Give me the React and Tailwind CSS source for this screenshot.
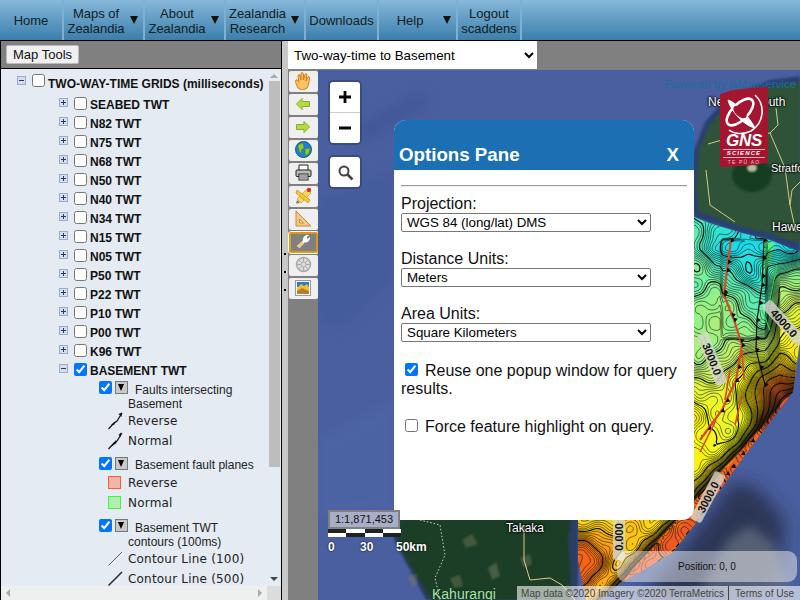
import React from "react";

const SANS = "font-['Liberation_Sans',Arial,sans-serif]";

/* ---------- height field for the contour overlay ---------- */
const gauss = (x, y, cx, cy, r) => Math.exp(-((x - cx) ** 2 + (y - cy) ** 2) / (2 * r * r));
function field(x, y) {
  const d = ((x - 793) * -191 + (y - 392) * -173) / 257.7;
  let v = 0.27 + Math.max(0, Math.min(1, (y - 250) / 170)) * 0.47;
  v += Math.max(0, 700 - x) * 0.0012;
  v += 0.34 * Math.exp(-Math.max(d, 0) / 6);
  v += 0.45 * gauss(x, y, 778, 392, 20);
  v += 0.22 * gauss(x, y, 585, 560, 22);
  v -= 0.18 * gauss(x, y, 788, 248, 14);
  v += 0.1 * gauss(x, y, 695, 262, 14);
  v -= 0.08 * gauss(x, y, 751, 277, 9);
  v -= 0.07 * gauss(x, y, 713, 250, 7);
  v += 0.06 * Math.sin(x * 0.055 + y * 0.02) * Math.cos(y * 0.05 - x * 0.012);
  v += 0.02 * Math.sin(x * 0.19 + 1) * Math.sin(y * 0.17);
  if (x > 766) v += 0.24 * Math.min(1, (x - 766) / 14) * gauss(x, y, 790, 325, 40);
  if (x > 722 && x < 766 && y > 240 && y < 340) v -= 0.03;
  return v;
}
const RAMP = [
  [0.05, [30, 150, 245]], [0.16, [16, 216, 240]], [0.3, [64, 232, 200]], [0.44, [140, 240, 140]],
  [0.58, [205, 240, 100]], [0.74, [248, 248, 16]], [0.9, [252, 196, 16]], [1.05, [252, 112, 16]], [1.2, [232, 80, 36]],
];
function colour(v) {
  if (v <= RAMP[0][0]) return RAMP[0][1];
  for (let i = 1; i < RAMP.length; i++) {
    if (v <= RAMP[i][0]) {
      const a = RAMP[i - 1], b = RAMP[i];
      const t = (v - a[0]) / (b[0] - a[0]);
      return a[1].map((c, k) => Math.round(c + (b[1][k] - c) * t));
    }
  }
  return RAMP[RAMP.length - 1][1];
}
const X0 = 570, Y0 = 205, STEP = 3, NX = 80, NY = 132;
const values = [];
for (let j = 0; j <= NY; j++) {
  const row = [];
  for (let i = 0; i <= NX; i++) row.push(field(X0 + i * STEP, Y0 + j * STEP));
  values.push(row);
}
const bands = {};
for (let j = 0; j < NY; j++) for (let i = 0; i < NX; i++) {
  const k = Math.round(values[j][i] * 50) / 50;
  const cx = X0 + i * STEP, cy = Y0 + j * STEP;
  (bands[k] = bands[k] || []).push(`M${cx} ${cy}h${STEP + 0.4}v${STEP + 0.4}h-${STEP + 0.4}z`);
}
const bandPaths = Object.keys(bands).map((k) => ({ c: `rgb(${colour(+k).join(",")})`, d: bands[k].join("") }));

function contours(level) {
  let d = "";
  const lerp = (a, b) => (level - a) / (b - a);
  for (let j = 0; j < NY; j++) for (let i = 0; i < NX; i++) {
    const a = values[j][i], b = values[j][i + 1], c = values[j + 1][i + 1], e = values[j + 1][i];
    const pts = [];
    const x = X0 + i * STEP, y = Y0 + j * STEP;
    if ((a < level) !== (b < level)) pts.push([x + lerp(a, b) * STEP, y]);
    if ((b < level) !== (c < level)) pts.push([x + STEP, y + lerp(b, c) * STEP]);
    if ((e < level) !== (c < level)) pts.push([x + lerp(e, c) * STEP, y + STEP]);
    if ((a < level) !== (e < level)) pts.push([x, y + lerp(a, e) * STEP]);
    if (pts.length >= 2) d += `M${pts[0][0].toFixed(1)} ${pts[0][1].toFixed(1)}L${pts[1][0].toFixed(1)} ${pts[1][1].toFixed(1)}`;
    if (pts.length === 4) d += `M${pts[2][0].toFixed(1)} ${pts[2][1].toFixed(1)}L${pts[3][0].toFixed(1)} ${pts[3][1].toFixed(1)}`;
  }
  return d;
}
const contourLines = [];
for (let n = 0; n < 110; n++) contourLines.push({ d: contours(0.02 + n * 0.0125), bold: n % 8 === 0 });

function teeth(points, every) {
  let d = "";
  for (let s = 0; s < points.length - 1; s++) {
    const [x0, y0] = points[s], [x1, y1] = points[s + 1];
    const len = Math.hypot(x1 - x0, y1 - y0);
    const nx = (x1 - x0) / len, ny = (y1 - y0) / len;
    for (let t = 0; t < len; t += every) {
      const x = x0 + nx * t, y = y0 + ny * t;
      d += `M${(x + nx * 2.5).toFixed(1)} ${(y + ny * 2.5).toFixed(1)}L${(x - nx * 2.5).toFixed(1)} ${(y - ny * 2.5).toFixed(1)}L${(x + ny * 4).toFixed(1)} ${(y - nx * 4).toFixed(1)}Z`;
    }
  }
  return d;
}
const EDGE = [[752, 440], [727, 473], [697, 520], [673, 550], [630, 580]];
const F1 = [[731, 240], [727, 270], [724, 295], [734, 320], [742, 345], [736, 380], [722, 410], [700, 440]];
const F2 = [[764, 240], [762, 285], [757, 320], [756, 350], [765, 385]];
const toD = (p) => p.map(([x, y], i) => `${i ? "L" : "M"}${x} ${y}`).join("");

const REGION = "M694 217 L712 224 L742 233 L770 240 L800 252 L800 340 L793 392 L745 455 L700 518 L672 553 L640 572 L620 583 L600 600 L586 600 L578 560 L578 515 L600 480 L694 400 Z";

function Tag({ t, x, y, r, w = 54 }) {
  return (
    <g transform={`translate(${x} ${y}) rotate(${r})`}>
      <rect x={-w / 2} y="-6" width={w} height="12" rx="3" fill="#d8d8d0" opacity="0.8" />
      <text x="0" y="4" textAnchor="middle" fontFamily="Liberation Sans" fontSize="11" fontWeight="700" fill="#111">{t}</text>
    </g>
  );
}

function MapArt() {
  return (
    <svg className="absolute left-0 top-0" width="482" height="530" viewBox="318 70 482 530">
      <defs>
        <clipPath id="region"><path d={REGION} /></clipPath>
        <filter id="soft"><feGaussianBlur stdDeviation="6" /></filter>
        <filter id="soft2"><feGaussianBlur stdDeviation="1.2" /></filter>
        <filter id="soft3"><feGaussianBlur stdDeviation="9" /></filter>
      </defs>
      <rect x="318" y="70" width="482" height="530" fill="#4a5f9f" />
      <g filter="url(#soft)" opacity="0.55">
        <path d="M420 90 L350 130 L360 145 L430 105 Z" fill="#3c5295" />
        <path d="M318 200 L394 170 L394 280 L340 330 L318 320 Z" fill="#41589a" />
        <path d="M318 440 L394 400 L394 510 L318 520 Z" fill="#5067a8" />
      </g>
      <path d="M800 76 L770 80 L728 96 L705 122 L694 150 L690 190 L694 217 L742 233 L770 240 L800 252 Z" fill="#2c3f72" filter="url(#soft2)" />
      <path d="M800 82 L772 86 L732 100 L710 124 L699 150 L696 190 L699 212 L742 227 L772 234 L800 244 Z" fill="#2f5238" filter="url(#soft2)" />
      <ellipse cx="752" cy="175" rx="20" ry="17" fill="#183c22" filter="url(#soft2)" />
      <ellipse cx="752" cy="168" rx="5" ry="4" fill="#b5bea0" filter="url(#soft2)" />
      <path d="M708 144 L722 140 L770 133 L778 125 L776 108 M770 133 L785 168 L790 205 L796 232 M706 170 L710 205 L735 222 M790 205 L792 190 L800 182" fill="none" stroke="#d8c88a" strokeWidth="1" />

      <path d="M394 520 L470 505 L584 505 L578 525 L578 600 L426 600 L394 540 Z" fill="#2c3c62" filter="url(#soft2)" />
      <path d="M400 520 L470 508 L572 510 L568 540 L572 600 L432 600 L398 545 Z" fill="#1f3d28" filter="url(#soft2)" />
      <g filter="url(#soft2)" opacity="0.35">
        <path d="M462 540 L472 534 L478 544 L466 548 Z" fill="#8a8f6a" />
        <path d="M488 568 L496 562 L500 576 L492 580 Z" fill="#9a9a78" />
        <path d="M408 577 L416 574 L418 584 L412 586 Z" fill="#8c8458" />
        <path d="M520 558 L530 554 L532 564 L524 568 Z" fill="#8a8f6a" />
        <path d="M450 578 L460 575 L463 586 L454 588 Z" fill="#8a8f6a" />
      </g>
      <path d="M524 525 L524 560 L530 580 L550 578 L562 585 L575 600" fill="none" stroke="#e0c888" strokeWidth="1" />
      <path d="M420 520 L440 525 L445 555 L435 578 L440 600" fill="none" stroke="#d8d8c8" strokeWidth="1" strokeDasharray="1.5 2" />

      <path d="M735 480 L760 490 L785 520 L780 585 L690 600 L640 600 L690 540 Z" fill="#252e48" opacity="0.85" filter="url(#soft3)" />
      <path d="M728 540 L750 525 L775 545 L790 590 L700 590 Z" fill="#8a949c" opacity="0.45" filter="url(#soft)" />

      <g clipPath="url(#region)">
        {bandPaths.map((b, i) => <path key={i} d={b.d} fill={b.c} />)}
        <path d="M764 240 L775 243 L768 272 L760 300 Z" fill="#50f08a" />
        <path d="M786 392 L745 452 L700 518 L670 552 L630 580 L624 578 L660 548 L694 512 L726 472 L750 436 L772 392 Z" fill="#ee5a26" />
        {contourLines.map((c, i) => (
          <path key={i} d={c.d} fill="none" stroke="#07110c" strokeWidth={c.bold ? 1.25 : 0.6} opacity={c.bold ? 1 : 0.9} />
        ))}
        <path d={toD(F1)} fill="none" stroke="#d84a24" strokeWidth="2.2" />
        <path d={teeth(F1, 22)} fill="#0a0a0a" />
        <path d={toD(F2)} fill="none" stroke="#111" strokeWidth="1.2" />
        <path d={teeth(F2, 18)} fill="#0a0a0a" />
        <path d={teeth(EDGE, 16)} fill="#120a04" />
        <path d="M716 420 L706 440 L700 452 M742 350 L744 380 M730 370 L725 400 M742 395 L735 425" fill="none" stroke="#d84a24" strokeWidth="1.6" />
        <path d="M770 300 L777 265 M762 310 L770 330" fill="none" stroke="#30d040" strokeWidth="1.2" />
      </g>
      <Tag t="3000.0" x={712} y={359} r={68} />
      <Tag t="4000.0" x={784} y={323} r={48} />
      <Tag t="3000.0" x={708} y={497} r={-62} />
      <Tag t="0.000" x={619} y={537} r={-90} w={46} />
    </svg>
  );
}

function NavItem({ lines, w, arrow }) {
  return (
    <div className={`relative flex h-full shrink-0 items-center border-r-2 border-[#7fb0d0] pt-[1px] text-[13px] leading-[15px] text-[#111c24] ${w}`}>
      <div className={`text-center ${arrow ? "w-[calc(100%-15px)]" : "w-full"}`}>
        {lines.map((l) => <div key={l}>{l}</div>)}
      </div>
      {arrow && <span className="absolute right-[5px] top-[16px] h-0 w-0 border-x-[4px] border-t-[8px] border-x-transparent border-t-[#111]" />}
    </div>
  );
}

function Expander({ minus }) {
  return (
    <svg width="9" height="9" viewBox="0 0 9 9" className="shrink-0">
      <rect x="0.5" y="0.5" width="8" height="8" fill="#d4deee" stroke="#9aacc8" />
      <path d="M2 4.5H7" stroke="#223a66" />
      {!minus && <path d="M4.5 2V7" stroke="#223a66" />}
    </svg>
  );
}

function TreeRow({ label, checked, minus }) {
  return (
    <div className="flex h-[19px] items-center pl-[58px]">
      <div className="-mt-[5px]"><Expander minus={minus} /></div>
      <input type="checkbox" readOnly checked={!!checked} className="m-0 ml-[6px] -mt-[3px] h-[13px] w-[13px]" />
      <span className="ml-[3px] mt-[1px] text-[12px] font-bold text-[#111]">{label}</span>
    </div>
  );
}

function LayerHead({ children, className = "" }) {
  return (
    <div className={`pl-[127px] indent-[-29px] text-[12px] leading-[14px] text-[#222] ${className}`}>
      <input type="checkbox" readOnly checked className="relative top-[-3px] m-0 inline-block h-[13px] w-[13px] align-middle" />
      <span className="relative top-[-3px] ml-[3px] inline-block h-[13px] w-[13px] border border-[#777] bg-[#c9c9c9] align-middle">
        <span className="absolute left-[2px] top-[2px] h-0 w-0 border-x-[3.5px] border-t-[7px] border-x-transparent border-t-black" />
      </span>
      <span className="ml-[7px]">{children}</span>
    </div>
  );
}

function LegendRow({ icon, label }) {
  return (
    <div className="flex h-[20px] items-center pl-[107px] font-['DejaVu_Sans',sans-serif] text-[12px] tracking-[0.2px] text-[#222]">
      <span className="flex h-[16px] w-[20px] shrink-0 items-center">{icon}</span>
      <span>{label}</span>
    </div>
  );
}

const FaultIcon = ({ rev }) => (
  <svg width="15" height="18" viewBox="0 0 15 18">
    <path d="M0.5 17 L6 11 L9 9 L14 1" stroke="#111" strokeWidth="1.2" fill="none" />
    <path d={rev ? "M3 13 L8 9 L6 13 Z M10.5 2 L14 0.5 L13.5 5 Z" : "M3 15 L8 8 L8.5 11 Z M10.5 3 L13 0.5 L13 5 Z"} fill="#111" />
  </svg>
);
const Swatch = ({ fill, border }) => (
  <span className={`block h-[13px] w-[13px] border ${border} ${fill}`} />
);
const LineIcon = ({ w }) => (
  <svg width="15" height="15" viewBox="0 0 15 15"><path d="M0.5 14.5L14 1" stroke="#222" strokeWidth={w} /></svg>
);

function ToolBtn({ children, active }) {
  return (
    <div className={`flex h-[21px] w-[29px] shrink-0 items-center justify-center rounded-[2px] pb-[2px] ${active ? "border-2 border-[#e09a10] bg-[#808080] outline outline-1 outline-white" : "bg-[#efefef]"}`}>
      {children}
    </div>
  );
}

const Tools = [
  <svg key="h" width="18" height="18" viewBox="0 0 18 18"><path d="M4 16 C2 12 1 9 2 8 C3 7 4 9 5 10 L4 4 C4 2 6 2 6 4 L7 8 L7 2 C7 0 9 0 9.3 2 L9.5 8 L11 2.5 C11.5 1 13 1.5 12.8 3 L12 9 L14 5 C15 4 16 5 15.5 6.5 C15 9 15 13 13 16 C11 18 6 18 4 16 Z" fill="#fdc264" stroke="#d07c14" strokeWidth="1" /></svg>,
  <svg key="l" width="14" height="12" viewBox="0 0 14 12"><path d="M0.5 6 L6 0.5 V3.5 H13.5 V8.5 H6 V11.5 Z" fill="#b4dc3c" stroke="#8cac28" /></svg>,
  <svg key="r" width="14" height="12" viewBox="0 0 14 12"><path d="M13.5 6 L8 0.5 V3.5 H0.5 V8.5 H8 V11.5 Z" fill="#b4dc3c" stroke="#8cac28" /></svg>,
  <svg key="g" width="17" height="17" viewBox="0 0 17 17"><circle cx="8.5" cy="8.5" r="8" fill="#1f7fd8" stroke="#16508c" /><path d="M3 4 L8 2 L9 7 L6 9 L7 13 L4 10 Z M10 8 L15 7 L14 12 L10.5 15 Z" fill="#8cd020" stroke="#4c8010" strokeWidth="0.5" /></svg>,
  <svg key="p" width="17" height="17" viewBox="0 0 17 17"><path d="M4 6 V1 H13 V6" fill="#fff" stroke="#222" /><rect x="1" y="6" width="15" height="6.5" rx="1" fill="#bbb" stroke="#222" /><rect x="4" y="10" width="9" height="6" fill="#eee" stroke="#222" /><path d="M5 12H12M5 14H12" stroke="#555" /></svg>,
  <svg key="e" width="17" height="17" viewBox="0 0 17 17"><path d="M2 12 L12 2 L16 6 L6 16 Z" fill="#fbd860" stroke="#c09a20" strokeWidth="0.7" /><path d="M2 3 L15 13 L13 16 L1 6 Z" fill="#f8c838" stroke="#b88a10" strokeWidth="0.7" /><circle cx="14" cy="3" r="2.2" fill="#e02828" /><path d="M1 16.5 L2 13 L5 16 Z" fill="#777" /></svg>,
  <svg key="t" width="18" height="17" viewBox="0 0 18 17"><path d="M2 1 L17 16 H2 Z M5.5 9 V13 H9.5 Z" fillRule="evenodd" fill="#f2c888" stroke="#c88a38" /></svg>,
  <svg key="w" width="15" height="15" viewBox="0 0 15 15"><path d="M1 12 L7 6.5 C6.5 3 9 0.5 13 1 L10.5 3.5 L11.5 5 L14 3 C14.5 6 12 9 8.5 8.5 L3.5 14 Z" fill="#fff" /><path d="M1 12 L6 7.5 L8 9.5 L3.5 14 Z" fill="#f6c878" /></svg>,
  <svg key="c" width="17" height="17" viewBox="0 0 17 17"><circle cx="8.5" cy="8.5" r="7" fill="#ddd" stroke="#aaa" strokeWidth="1.5" /><path d="M8.5 1.5V15.5M1.5 8.5H15.5M3.5 3.5L13.5 13.5M13.5 3.5L3.5 13.5" stroke="#aaa" /><circle cx="8.5" cy="8.5" r="2.5" fill="#ddd" stroke="#aaa" /></svg>,
  <svg key="i" width="16" height="16" viewBox="0 0 16 16"><rect x="0.5" y="0.5" width="15" height="15" fill="#fff" stroke="#999" /><rect x="2" y="2" width="12" height="5" fill="#2c78d0" /><path d="M2 8 L6 4 L9 6 L12 4 L14 7 V14 H2 Z" fill="#f5c020" /><path d="M2 11 L7 8 L14 11 V14 H2 Z" fill="#b87c30" /></svg>,
];

function GnsLogo() {
  return (
    <div className="absolute left-[402px] top-[17px] flex h-[80px] w-[48px] flex-col items-center bg-[#a41530] [clip-path:polygon(0_9%,25%_4%,70%_1%,100%_0,100%_95%,60%_98%,0_100%)]">
      <svg width="44" height="46" viewBox="0 0 44 46" className="mt-[3px]">
        <g fill="none" stroke="#fff">
          <path d="M6 10 C14 12 28 28 33 38 C22 36 8 20 6 10 Z" fill="#fff" strokeWidth="1" />
          <ellipse cx="18" cy="22" rx="17" ry="8" transform="rotate(-45 18 22)" strokeWidth="2.6" />
          <ellipse cx="18" cy="22" rx="8" ry="4.5" transform="rotate(42 18 22)" fill="#a41530" stroke="none" />
          <path d="M33 5 C44 15 42 33 29 41 C21 45 12 44 7 40" strokeWidth="1.6" />
        </g>
      </svg>
      <div className={`${SANS} -mt-[2px] text-[17px] font-bold italic leading-[14px] tracking-[-0.3px] text-white`}>GNS</div>
      <div className={`${SANS} mt-[1px] w-[42px] border-y border-[#e9a6b0] text-center text-[6px] font-bold italic leading-[7px] tracking-[1.1px] text-white`}>SCIENCE</div>
      <div className={`${SANS} text-[5px] leading-[8px] tracking-[1.2px] text-[#f3c4cc]`}>TE PŪ AO</div>
    </div>
  );
}

function MapLabel({ className, children }) {
  return (
    <div className={`absolute ${SANS} whitespace-nowrap text-[12px] text-white [text-shadow:0_0_2px_#000,0_0_2px_#000,0_0_3px_#000] ${className}`}>{children}</div>
  );
}

function OptionRow({ label, value, className = "" }) {
  return (
    <div className={className}>
      <div className="text-[16px] leading-[18px] text-[#111]">{label}</div>
      <select readOnly value={value} className="block h-[19px] w-[250px] rounded-[2px] border border-[#767676] bg-white pl-[1px] text-[13.333px] leading-[15px] text-black">
        <option>{value}</option>
      </select>
    </div>
  );
}

export default function App() {
  return (
    <div className={`${SANS} h-[600px] w-[800px] overflow-hidden bg-black`}>
      <nav className="flex h-[40px] w-full bg-gradient-to-b from-[#86b8da] to-[#3a7fab] pl-0">
        <NavItem w="w-[64px]" lines={["Home"]} />
        <NavItem w="w-[81px]" lines={["Maps of", "Zealandia"]} arrow />
        <NavItem w="w-[81px]" lines={["About", "Zealandia"]} arrow />
        <NavItem w="w-[80px]" lines={["Zealandia", "Research"]} arrow />
        <NavItem w="w-[73px]" lines={["Downloads"]} />
        <NavItem w="w-[79px]" lines={["Help"]} arrow />
        <NavItem w="w-[64px]" lines={["Logout", "scaddens"]} />
      </nav>

      <div className="flex h-[560px] border-t border-black">
        {/* left panel */}
        <aside className="flex w-[282px] shrink-0 flex-col border-x border-black">
          <div className="flex h-[28px] shrink-0 items-center border-b border-black bg-[#808080] pl-[5px]">
            <button className="h-[19px] rounded-[2px] border border-[#bbb] bg-[#f0f0f0] px-[6px] text-[13px] leading-[15px] text-[#111]">Map Tools</button>
          </div>
          <div className="flex min-h-0 flex-1 flex-col bg-[#e4ebf2]">
            <div className="flex min-h-0 flex-1">
              <div className="min-w-0 flex-1 overflow-hidden">
                <div className="flex h-[26px] items-start pl-[16px] pt-[5px]">
                  <div className="mt-[2px]"><Expander minus /></div>
                  <input type="checkbox" readOnly className="m-0 ml-[6px] h-[13px] w-[13px]" />
                  <span className="ml-[3px] mt-[1px] whitespace-nowrap text-[12px] font-bold text-[#111]">TWO-WAY-TIME GRIDS (milliseconds)</span>
                </div>
                {["SEABED TWT","N82 TWT","N75 TWT","N68 TWT","N50 TWT","N40 TWT","N34 TWT","N15 TWT","N05 TWT","P50 TWT","P22 TWT","P10 TWT","P00 TWT","K96 TWT"].map((l) => <TreeRow key={l} label={l} />)}
                <TreeRow label="BASEMENT TWT" checked minus />
                <LayerHead className="mt-[3px]">Faults intersecting Basement</LayerHead>
                <LegendRow icon={<FaultIcon rev />} label="Reverse" />
                <LegendRow icon={<FaultIcon />} label="Normal" />
                <LayerHead className="mt-[7px]">Basement fault planes</LayerHead>
                <LegendRow icon={<Swatch fill="bg-[#f2b6a8]" border="border-[#ff5a30]" />} label="Reverse" />
                <LegendRow icon={<Swatch fill="bg-[#b0f0b0]" border="border-[#44f044]" />} label="Normal" />
                <LayerHead className="mt-[8px]">Basement TWT contours (100ms)</LayerHead>
                <LegendRow icon={<LineIcon w={0.7} />} label="Contour Line (100)" />
                <LegendRow icon={<LineIcon w={1.4} />} label="Contour Line (500)" />
              </div>
              <div className="flex w-[14px] shrink-0 flex-col items-center pt-[5px]">
                <span className="h-0 w-0 border-x-[4px] border-b-[4px] border-x-transparent border-b-[#a8a8a8]" />
                <div className="mt-[3px] h-[386px] w-[11px] bg-[#bdbdbd]" />
                <div className="flex-1" />
                <span className="mb-[5px] h-0 w-0 border-x-[4px] border-t-[4px] border-x-transparent border-t-[#444]" />
              </div>
            </div>
            <div className="flex h-[14px] shrink-0 items-center bg-[#eef0f0]">
              <div className="flex flex-1 items-center justify-between px-[5px]">
                <span className="h-0 w-0 border-y-[4px] border-r-[4px] border-y-transparent border-r-[#aaa]" />
                <span className="h-0 w-0 border-y-[4px] border-l-[4px] border-y-transparent border-l-[#aaa]" />
              </div>
              <div className="h-full w-[14px] bg-[#dcdcdc]" />
            </div>
          </div>
        </aside>

        {/* splitter */}
        <div className="flex w-[6px] shrink-0 flex-col items-center bg-[#c8c8c8]">
          <span className="mt-[212px] h-[2px] w-[2px] bg-black" />
          <span className="mt-[16px] h-[2px] w-[2px] bg-black" />
          <span className="mt-[16px] h-[2px] w-[2px] bg-black" />
        </div>

        {/* right */}
        <div className="flex min-w-0 flex-1 flex-col bg-[#808080]">
          <div className="h-[29px] shrink-0">
            <select readOnly value="Two-way-time to Basement" className="h-[28px] w-[249px] bg-white pl-[2px] text-[13.333px] text-black">
              <option>Two-way-time to Basement</option>
            </select>
          </div>
          <div className="flex min-h-0 flex-1">
            <div className="flex w-[30px] shrink-0 flex-col items-center gap-[2px] pt-[1px]">
              {Tools.map((t, i) => <ToolBtn key={i} active={i === 7}>{t}</ToolBtn>)}
            </div>
            <div className="relative min-w-0 flex-1 overflow-hidden">
              <MapArt />

              <div className="absolute left-[12px] top-[12px] flex w-[30px] flex-col overflow-hidden rounded-[3px] bg-white shadow-[0_0_0_2px_rgba(0,0,0,0.2)]">
                <div className="flex h-[31px] items-center justify-center border-b border-[#ccc]">
                  <svg width="14" height="14" viewBox="0 0 14 14"><path d="M7 1V13M1 7H13" stroke="#000" strokeWidth="2.8" /></svg>
                </div>
                <div className="flex h-[30px] items-center justify-center">
                  <svg width="12" height="4" viewBox="0 0 12 4"><path d="M0 2H12" stroke="#000" strokeWidth="2.8" /></svg>
                </div>
              </div>
              <div className="absolute left-[12px] top-[87px] flex h-[30px] w-[30px] items-center justify-center rounded-[3px] bg-white shadow-[0_0_0_2px_rgba(0,0,0,0.2)]">
                <svg width="17" height="17" viewBox="0 0 17 17"><circle cx="7" cy="7" r="4.5" fill="none" stroke="#444" strokeWidth="2" /><path d="M10.5 10.5L15.5 15.5" stroke="#444" strokeWidth="2.6" /></svg>
              </div>

              <div className="absolute left-[347px] top-[6px] whitespace-nowrap text-[11.5px] text-[#1a6e9e]">Powered by jsMapservice</div>
              <MapLabel className="left-[390px] top-[23px]">New Plymouth</MapLabel>
              <GnsLogo />
              <MapLabel className="left-[453px] top-[90px] !text-[11px]">Stratford</MapLabel>
              <MapLabel className="left-[454px] top-[148px]">Hawera</MapLabel>
              <MapLabel className="left-[188px] top-[449px]">Takaka</MapLabel>
              <div className="absolute left-[114px] top-[514px] whitespace-nowrap text-[14px] text-[#a4e8a4] [text-shadow:0_0_2px_#122]">Kahurangi</div>

              {/* options */}
              <div className="absolute left-[76px] top-[50px] flex h-[400px] w-[300px] flex-col rounded-[12px] rounded-bl-none bg-white">
                <div className="flex h-[50px] shrink-0 items-end justify-between rounded-t-[12px] bg-[#1c6fb2] pb-[5px] pl-[5px] pr-[15px] text-[18.72px] font-bold leading-[21px] text-white">
                  <span>Options Pane</span><span>X</span>
                </div>
                <div className="px-[7px] pt-[15px]">
                  <div className="h-[2px] border-t border-b border-t-[#999] border-b-[#eee]" />
                  <OptionRow className="mt-[8px]" label="Projection:" value="WGS 84 (long/lat) DMS" />
                  <OptionRow className="mt-[18px]" label="Distance Units:" value="Meters" />
                  <OptionRow className="mt-[18px]" label="Area Units:" value="Square Kilometers" />
                  <div className="mt-[20px] pr-[5px] text-[16px] leading-[18px] text-[#111]">
                    <input type="checkbox" readOnly checked className="relative top-[-2px] m-0 ml-[4px] mr-[7px] inline-block h-[13px] w-[13px] align-middle" />
                    Reuse one popup window for query results.
                  </div>
                  <div className="mt-[20px] text-[16px] leading-[18px] text-[#111]">
                    <input type="checkbox" readOnly className="relative top-[-2px] m-0 ml-[4px] mr-[7px] inline-block h-[13px] w-[13px] align-middle" />
                    Force feature highlight on query.
                  </div>
                </div>
              </div>

              {/* scale */}
              <div className="absolute left-[10px] top-[440px] w-[72px]">
                <div className="flex h-[19px] items-center justify-center border-2 border-[#808080] bg-[#a9aec8] text-[11px] text-[#111]">1:1,871,453</div>
                <div className="grid h-[8px] w-[73px] grid-cols-4 grid-rows-2">
                  <span className="bg-[#222]" /><span className="bg-white" /><span className="bg-[#222]" /><span className="bg-white" />
                  <span className="bg-white" /><span className="bg-[#222]" /><span className="bg-white" /><span className="bg-[#222]" />
                </div>
                <div className="relative mt-[1px] h-[14px] text-[12px] font-bold text-white [text-shadow:0_0_2px_#000]">
                  <span className="absolute left-0">0</span>
                  <span className="absolute left-[32px]">30</span>
                  <span className="absolute left-[68px]">50km</span>
                </div>
              </div>

              {/* position */}
              <div className="absolute left-[299px] top-[481px] flex h-[31px] w-[180px] items-center rounded-[9px] bg-white/45 pl-[61px] text-[10px] text-[#111]">Position: 0, 0</div>

              {/* attribution */}
              <div className="absolute bottom-0 right-0 flex h-[14px] items-center bg-white/60 text-[10px] text-[#444]">
                <span className="px-[4px]">Map data ©2020 Imagery ©2020 TerraMetrics</span>
                <span className="border-l border-[#444] px-[6px]">Terms of Use</span>
              </div>
            </div>
          </div>
        </div>
      </div>
    </div>
  );
}
